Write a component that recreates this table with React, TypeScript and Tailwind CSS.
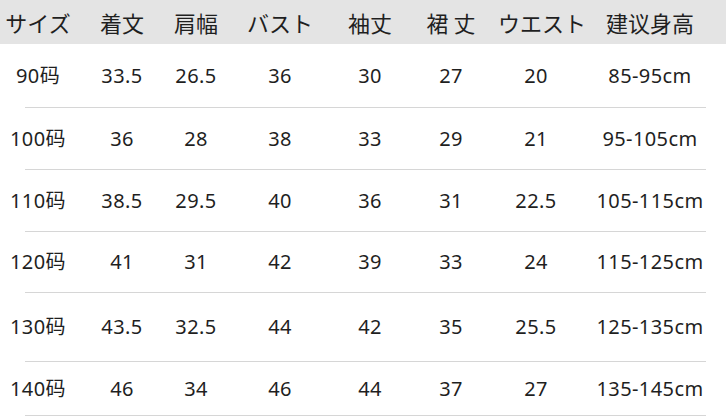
const headers = ["サイズ", "着文", "肩幅", "バスト", "袖丈", "裙 丈", "ウエスト", "建议身高"];

const rows: { cells: string[]; h: string }[] = [
  { cells: ["90码", "33.5", "26.5", "36", "30", "27", "20", "85-95cm"], h: "h-[63px]" },
  { cells: ["100码", "36", "28", "38", "33", "29", "21", "95-105cm"], h: "h-[61px]" },
  { cells: ["110码", "38.5", "29.5", "40", "36", "31", "22.5", "105-115cm"], h: "h-[61px]" },
  { cells: ["120码", "41", "31", "42", "39", "33", "24", "115-125cm"], h: "h-[60px]" },
  { cells: ["130码", "43.5", "32.5", "44", "42", "35", "25.5", "125-135cm"], h: "h-[68px]" },
  { cells: ["140码", "46", "34", "46", "44", "37", "27", "135-145cm"], h: "h-[53px]" },
];

const cols = "grid grid-cols-[76px_92px_56px_112px_68px_94px_76px_152px] items-center";

export default function App() {
  return (
    <div className="w-[726px] h-[417px] overflow-hidden bg-white text-[#1f1f1f] font-['Noto_Sans','Noto_Sans_CJK_SC',sans-serif]">
      {/* Header */}
      <div className={`${cols} h-[44px] bg-[#e4e4e4]`}>
        {headers.map((h) => (
          <div key={h} className="text-center text-[22px] leading-none whitespace-nowrap font-['Noto_Sans_CJK_JP','Noto_Sans_CJK_SC',sans-serif]">
            {h}
          </div>
        ))}
      </div>

      {/* Rows */}
      {rows.map((r) => (
        <div key={r.cells[0]}>
          <div className={`${cols} ${r.h}`}>
            {r.cells.map((c, i) => (
              <div key={i} className="text-center text-[20px] leading-none tracking-[0.4px] whitespace-nowrap">
                {c}
              </div>
            ))}
          </div>
          <div className="ml-[25px] w-[681px] h-px bg-[#d6d6d6]" />
        </div>
      ))}
    </div>
  );
}
